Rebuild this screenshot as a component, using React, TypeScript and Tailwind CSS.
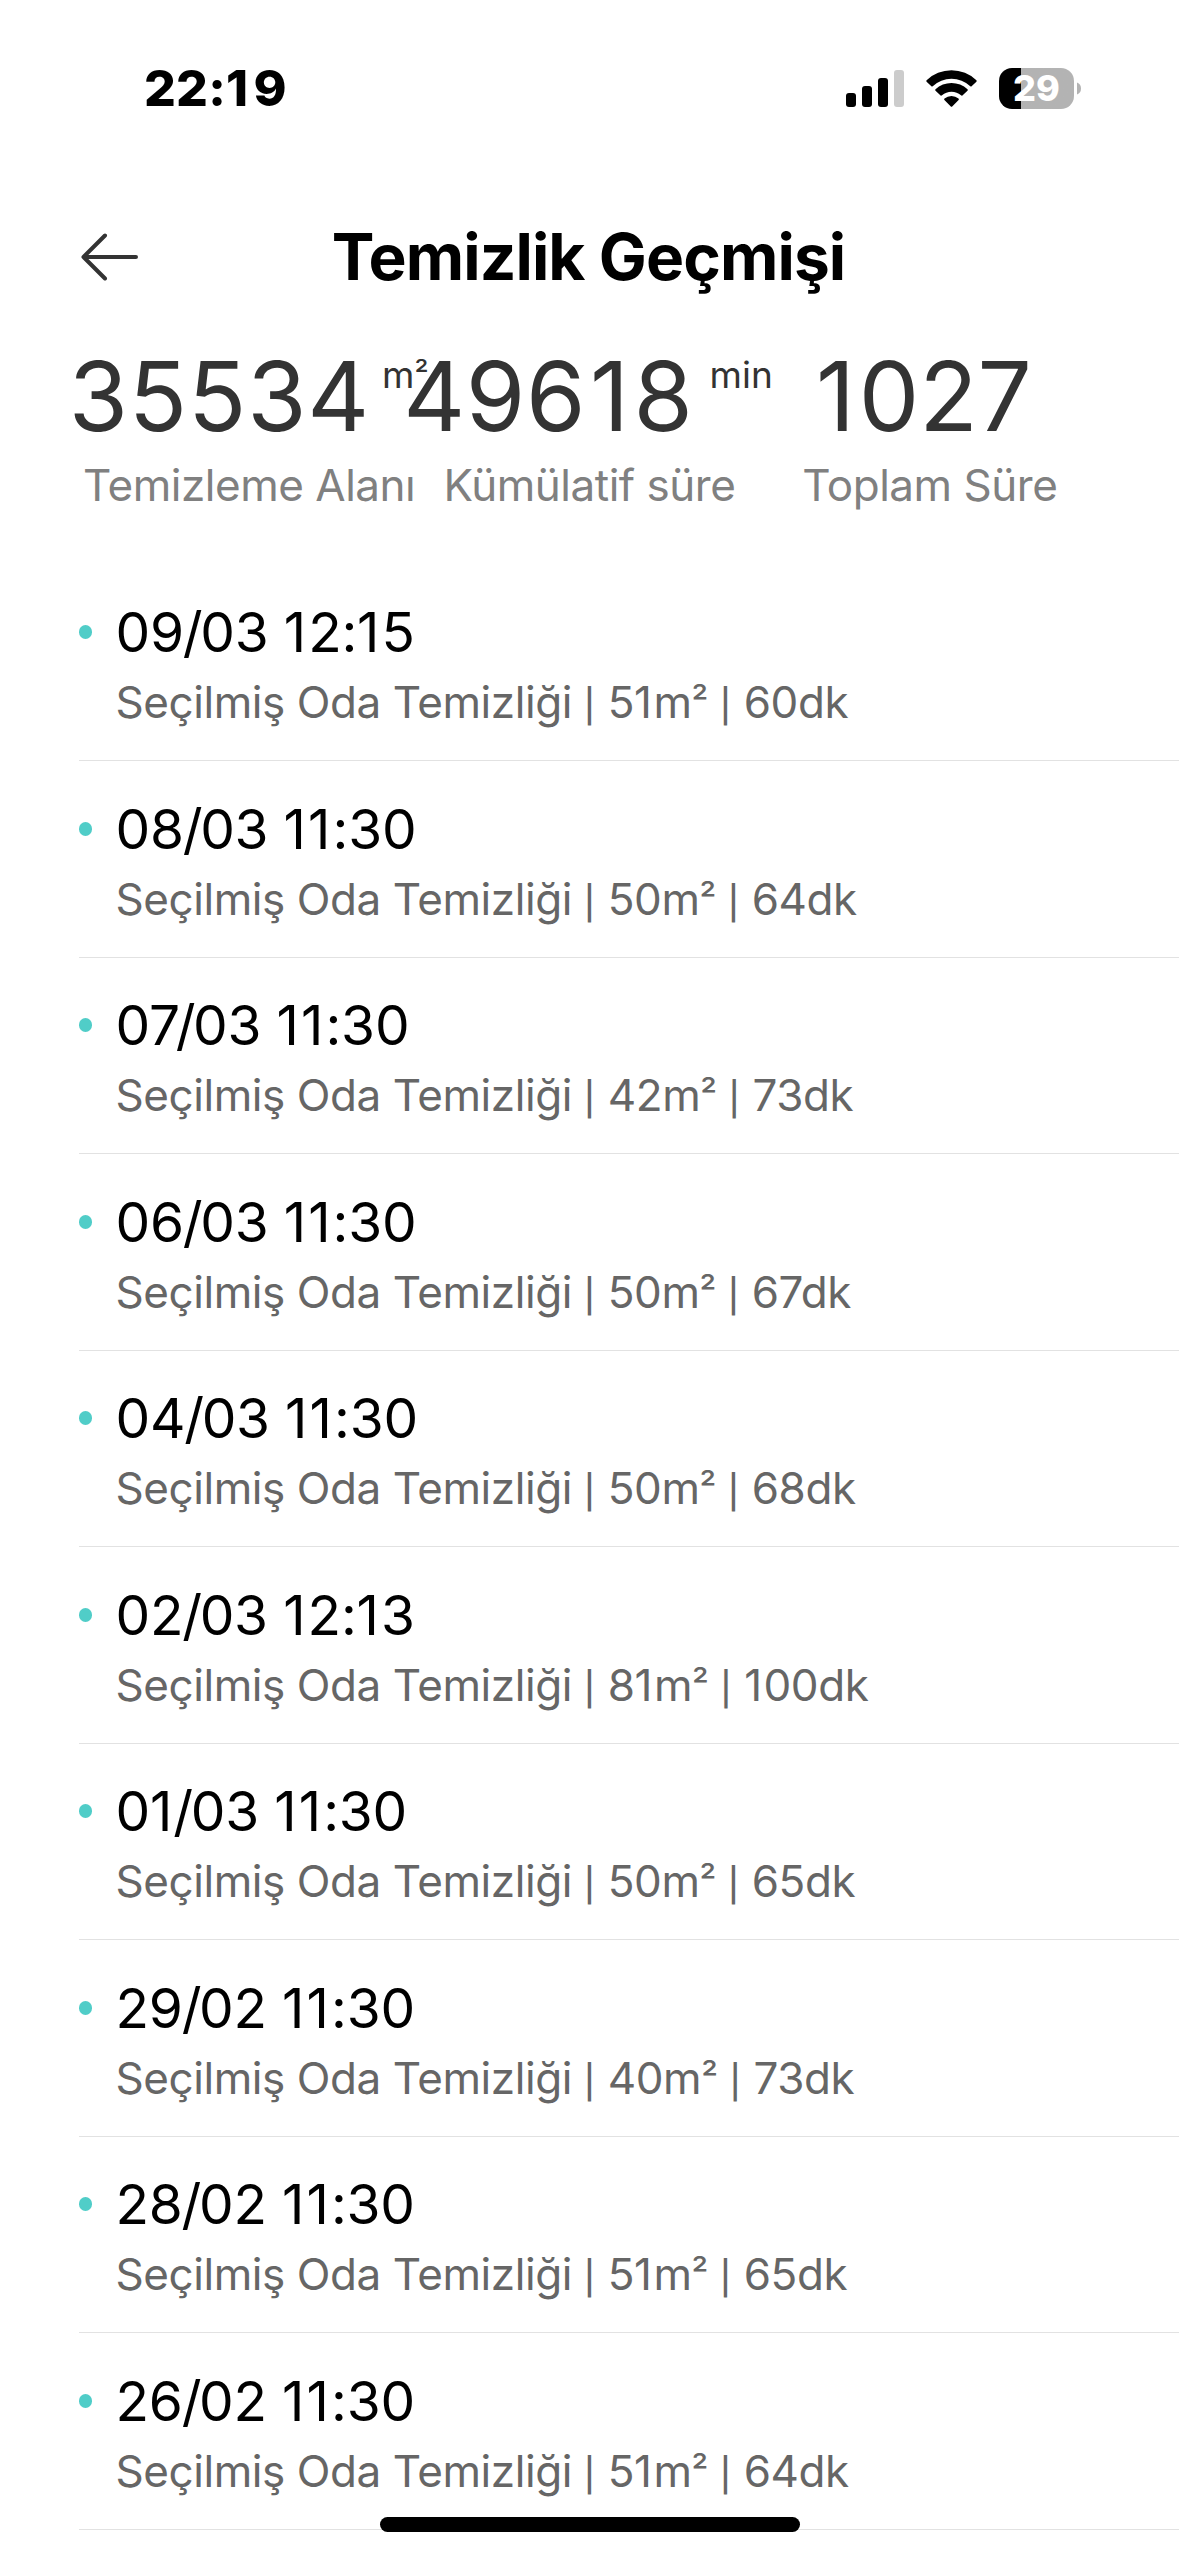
const records = [
  { date: '09/03 12:15', area: 51, minutes: 60 },
  { date: '08/03 11:30', area: 50, minutes: 64 },
  { date: '07/03 11:30', area: 42, minutes: 73 },
  { date: '06/03 11:30', area: 50, minutes: 67 },
  { date: '04/03 11:30', area: 50, minutes: 68 },
  { date: '02/03 12:13', area: 81, minutes: 100 },
  { date: '01/03 11:30', area: 50, minutes: 65 },
  { date: '29/02 11:30', area: 40, minutes: 73 },
  { date: '28/02 11:30', area: 51, minutes: 65 },
  { date: '26/02 11:30', area: 51, minutes: 64 },
];

const stats = [
  { value: '35534', unit: 'm²', label: 'Temizleme Alanı', valueClass: 'tracking-[0.800px]', unitClass: 'ml-[12px] mr-[1px]' },
  { value: '49618', unit: 'min', label: 'Kümülatif süre', valueClass: 'tracking-[0.600px]', unitClass: 'ml-[16px] mr-[3px]' },
  { value: '1027', unit: '', label: 'Toplam Süre', valueClass: 'tracking-[-0.200px]', unitClass: 'ml-[12px]' },
];

/* Opens up the narrow "1", tightens the date slash and sets "²" and "|" at their own sizes. */
function Spaced({ text }: { text: string }) {
  return (
    <>
      {text.split(/([1/²|])/).map((part, i, all) => {
        if (part === '1') {
          const afterSix = (all[i - 1] ?? '').endsWith('6');
          return <span key={i} className={afterSix ? 'mr-[0.042em] ml-[0.04em]' : 'mr-[0.042em]'}>1</span>;
        }
        if (part === '/') {
          const afterSeven = (all[i - 1] ?? '').endsWith('7');
          return <span key={i} className={afterSeven ? 'mr-[-0.04em] ml-[-0.075em]' : 'mr-[-0.04em] ml-[-0.02em]'}>/</span>;
        }
        if (part === '²') return <span key={i} className="align-[0.06em] text-[0.86em] leading-none">²</span>;
        if (part === '|') return <span key={i} className="mr-[1px] text-[33px] leading-none font-medium">|</span>;
        return part;
      })}
    </>
  );
}

function StatusBar() {
  return (
    <div className="flex h-[176px] w-full items-center justify-between pr-[98px] pl-[144px]">
      <span className="text-[50px] leading-[60px] font-extrabold tracking-[0.200px]">
        22:<span className="tracking-[5.500px]">19</span>
      </span>
      <div className="flex items-center">
        <svg width="58" height="37" viewBox="0 0 58 37" className="mr-[22px]">
          <rect x="0" y="23" width="10" height="14" rx="3" />
          <rect x="16" y="16" width="10" height="21" rx="3" />
          <rect x="32" y="8" width="10" height="29" rx="3" />
          <rect x="48" y="0" width="10" height="37" rx="3" fill="#cccccc" />
        </svg>
        <svg width="51" height="37" viewBox="0 0 51 37" className="mr-[22px]">
          <path d="M0.6 10.2A36 36 0 0 1 50.4 10.2Q51 11 50.4 11.7L45.6 16.3Q45 16.8 44.3 16.2A27.5 27.5 0 0 0 6.7 16.2Q6 16.8 5.4 16.3L0.6 11.7Q0 11 0.6 10.2Z" />
          <path d="M9.5 19.2A23.5 23.5 0 0 1 41.5 19.2Q42.2 20 41.5 20.7L36.4 25.4Q35.8 26 35 25.3A14.5 14.5 0 0 0 16 25.3Q15.2 26 14.6 25.4L9.5 20.7Q8.8 20 9.5 19.2Z" />
          <path d="M18.5 28.6A10.8 10.8 0 0 1 32.5 28.6Q33.3 29.4 32.6 30.1L26.2 36.5Q25.5 37 24.8 36.5L18.4 30.1Q17.7 29.4 18.5 28.6Z" />
        </svg>
        <div className="flex items-center">
          <div className="flex h-[41px] w-[75px] items-center justify-center rounded-[13px] bg-linear-to-r from-black from-[22px] to-[#b3b3b3] to-[22px]">
            <span className="text-[36px] leading-[41px] font-extrabold text-white">29</span>
          </div>
          <svg width="4" height="13" viewBox="0 0 4 13" className="ml-[3px]">
            <path d="M0 0.5Q4 2 4 6.5Q4 11 0 12.5Z" fill="#b3b3b3" />
          </svg>
        </div>
      </div>
    </div>
  );
}

function Header() {
  return (
    <header className="grid h-[161px] grid-cols-[1fr_auto_1fr] items-center pr-[82px] pl-[80px]">
      <svg width="60" height="48" viewBox="0 0 60 48" fill="none" stroke="#333333" strokeWidth="4" strokeLinecap="round" strokeLinejoin="round">
        <path d="M56 24H3.500M25 2.500L3.500 24L25 45.500" />
      </svg>
      <h1 className="text-[64px] leading-[80px] font-bold tracking-[-0.9px]">Temizlik Geçmişi</h1>
    </header>
  );
}

export default function App() {
  return (
    <div className="relative flex h-[2556px] w-[1179px] flex-col overflow-hidden bg-white font-['Inter',sans-serif] text-black">
      <StatusBar />
      <Header />
      <section className="grid h-[227.500px] grid-cols-3 px-[79px]">
        {stats.map((s) => (
          <div key={s.label} className="flex flex-col items-center whitespace-nowrap">
            <div className="flex h-[117px] text-[#333333]">
              <span className={`text-[96px] leading-[119px] ${s.valueClass}`}><Spaced text={s.value} /></span>
              <span className={`pt-[8px] text-[37px] leading-[60px] ${s.unitClass}`}><Spaced text={s.unit} /></span>
            </div>
            <span className="text-[44px] leading-[62px] tracking-[-0.480px] text-[#808080]">{s.label}</span>
          </div>
        ))}
      </section>
      <ul className="flex flex-col pl-[79px]">
        {records.map((r) => (
          <li key={r.date} className="flex h-[196.560px] border-b border-[#e2e2e2] pt-[33.500px]">
            <span className="mt-[27px] h-[14px] w-[13px] rounded-full bg-[#50cdc8]" />
            <div className="ml-[23.500px] flex flex-col whitespace-nowrap">
              <span className="text-[55px] leading-[68px] tracking-[-0.220px]"><Spaced text={r.date} /></span>
              <span className="mt-[8px] h-[56px] text-[44px] leading-[56px] tracking-[-0.430px] text-[#666666]">
                <Spaced text={`Seçilmiş Oda Temizliği | ${r.area}m² | ${r.minutes}dk`} />
              </span>
            </div>
          </li>
        ))}
      </ul>
      <div className="absolute bottom-[24px] left-[380px] h-[15px] w-[420px] rounded-full bg-black" />
    </div>
  );
}
